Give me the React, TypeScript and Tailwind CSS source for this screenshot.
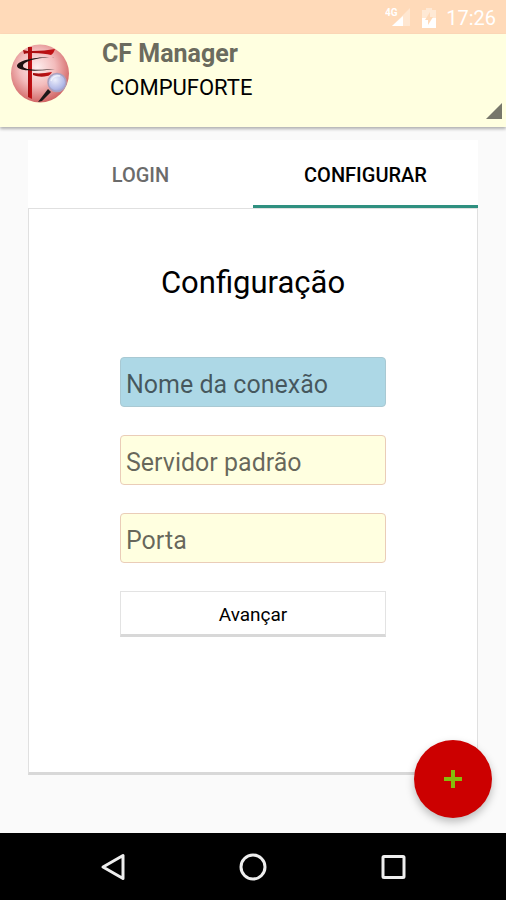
import React, { useState } from 'react';

const fields = [
  { id: 'nome', label: 'Nome da conexão', color: 'bg-[#add8e6] border-[#a9c9d3]' },
  { id: 'servidor', label: 'Servidor padrão', color: 'bg-[#ffffe0] border-[#eacdb8]' },
  { id: 'porta', label: 'Porta', color: 'bg-[#ffffe0] border-[#eacdb8]' },
];

const tabs = [
  { id: 'login', label: 'LOGIN' },
  { id: 'configurar', label: 'CONFIGURAR' },
];

function Logo() {
  return (
    <svg width="60" height="60" viewBox="0 0 60 60" aria-hidden="true">
      <defs>
        <radialGradient id="ball" cx="0.45" cy="0.4" r="0.62">
          <stop offset="0" stopColor="#fdeeee" />
          <stop offset="0.5" stopColor="#f3bcbc" />
          <stop offset="1" stopColor="#d0605f" />
        </radialGradient>
        <linearGradient id="red" x1="0" x2="1">
          <stop offset="0" stopColor="#a00c0e" />
          <stop offset="1" stopColor="#c41215" />
        </linearGradient>
        <radialGradient id="lens" cx="0.4" cy="0.35" r="0.7">
          <stop offset="0" stopColor="#eceffc" />
          <stop offset="0.7" stopColor="#b5bce8" />
          <stop offset="1" stopColor="#959bd2" />
        </radialGradient>
      </defs>
      <circle cx="30" cy="30.5" r="29" fill="url(#ball)" />
      <path d="M18 4h4v52l-4-2z" fill="url(#red)" />
      <path d="M13 7c3 1 6 1 10 1 8 0 15-1 22-2-1 3-2 5-4 6-4-1-10-2-18-2-4 0-7 0-9 1z" fill="url(#red)" />
      <path d="M23 30c7 1 12 0 19-1-1 2-3 4-5 4-4 1-9 1-14-1z" fill="url(#red)" />
      <path
        d="M45 14.500c-11-1-32 3-32 8.500 0 4 14 4.500 32 3-20 3-38 2-38-3 0-6 22-10 38-8.500z"
        fill="#1d1010"
      />
      <path d="M38 46l3 3-9 9-4 1z" fill="#1c1818" />
      <circle cx="47" cy="39.500" r="9" fill="url(#lens)" stroke="#aaa0be" strokeWidth="1.500" />
      <path d="M41 38c1-4 5-6 9-5" fill="none" stroke="#fff" strokeWidth="1.500" opacity="0.6" />
    </svg>
  );
}

function StatusBar() {
  return (
    <div className="flex h-[34px] items-center justify-end bg-[#ffdab9] pr-[10px] pt-[2px] text-white">
      <svg width="26" height="22" viewBox="0 0 26 22" className="mr-[11px]" aria-hidden="true">
        <path d="M25 1v18H7z" fill="#fff" opacity="0.35" />
        <path d="M18 9v10H7z" fill="#fff" />
        <text x="0" y="9" fontSize="10" fontWeight="700" fontFamily="Roboto" fill="#fff">4G</text>
      </svg>
      <svg width="14" height="20" viewBox="0 0 14 20" className="mr-[10px]" aria-hidden="true">
        <path d="M4 0h6v2h4v8H0V2h4z" fill="#fff" opacity="0.4" />
        <path d="M0 10h14v10H0z" fill="#fff" />
        <path d="M8 4v5h3l-5 8v-5H3z" fill="#ffdab9" />
      </svg>
      <span className="text-xl leading-6">17:26</span>
    </div>
  );
}

export default function App() {
  const [tab, setTab] = useState('configurar');
  const [values, setValues] = useState<Record<string, string>>({});

  return (
    <div className="flex min-h-screen flex-col bg-[#fafafa] font-[Roboto,sans-serif] text-black">
      <StatusBar />

      <header className="relative z-10 flex h-[93px] bg-[#ffffe0] pl-[10px] shadow-[0_2px_3px_rgba(0,0,0,0.3)]">
        <div className="mr-8 pt-[9px]">
          <Logo />
        </div>
        <div className="flex flex-1 flex-col">
          <h1 className="pt-1 text-[25px] font-bold leading-8 text-[#6b6b5e]">CF Manager</h1>
          <div className="relative flex-1">
            <select
              aria-label="Empresa"
              className="w-full appearance-none bg-transparent pl-2 pr-6 text-[22px] leading-9 outline-none"
            >
              <option>COMPUFORTE</option>
            </select>
            <svg
              width="16"
              height="16"
              viewBox="0 0 16 16"
              className="pointer-events-none absolute bottom-2 right-1"
              aria-hidden="true"
            >
              <path d="M16 0v16H0z" fill="#77776b" />
            </svg>
          </div>
        </div>
      </header>

      <main className="relative flex flex-1 flex-col px-7 pb-[58px] pt-[13px]">
        <div role="tablist" className="grid grid-cols-2 bg-white">
          {tabs.map((t) => (
            <button
              key={t.id}
              type="button"
              role="tab"
              aria-selected={tab === t.id}
              onClick={() => setTab(t.id)}
              className={`h-[68px] border-b-[3px] pt-1 text-xl font-medium ${
                tab === t.id ? 'border-[#2f9080] text-black' : 'border-transparent text-[#6b6b6b]'
              }`}
            >
              {t.label}
            </button>
          ))}
        </div>

        <form
          className="flex flex-1 flex-col gap-7 border border-b-[3px] border-[#e0e0e0] border-b-[#d8d8d8] bg-white px-[91px] pt-[54px]"
          onSubmit={(e) => e.preventDefault()}
        >
          <h2 className="mb-[26px] text-center text-[31px] leading-10">Configuração</h2>
          {fields.map((f) => (
            <input
              key={f.id}
              id={f.id}
              type="text"
              aria-label={f.label}
              placeholder={f.label}
              value={values[f.id] || ''}
              onChange={(e) => setValues({ ...values, [f.id]: e.target.value })}
              className={`h-[50px] w-full rounded-[4px] border px-[5px] pt-1 text-[25px] outline-none placeholder:text-black/60 ${f.color}`}
            />
          ))}
          <button
            type="submit"
            className="h-[46px] border border-b-[3px] border-[#e3e3e3] border-b-[#d8d8d8] bg-white pt-1 text-[19px]"
          >
            Avançar
          </button>
        </form>

        <button
          type="button"
          aria-label="Adicionar"
          className="absolute bottom-[15px] right-[14px] flex size-[78px] items-center justify-center rounded-full bg-[#cc0000] shadow-[0_4px_8px_rgba(0,0,0,0.25)]"
        >
          <svg width="20" height="20" viewBox="0 0 20 20" aria-hidden="true">
            <path d="M8 1h4v7h7v4h-7v7H8v-7H1V8h7z" fill="#86bd0c" />
          </svg>
        </button>
      </main>

      <nav className="flex h-[67px] bg-black px-[43px] text-[#eeeeee]">
        <button type="button" aria-label="Voltar" className="flex flex-1 items-center justify-center">
          <svg width="28" height="28" viewBox="0 0 28 28" fill="none" stroke="currentColor" strokeWidth="3">
            <path d="M24 2.500v23L4 14z" strokeLinejoin="round" />
          </svg>
        </button>
        <button type="button" aria-label="Início" className="flex flex-1 items-center justify-center">
          <svg width="28" height="28" viewBox="0 0 28 28" fill="none" stroke="currentColor" strokeWidth="3">
            <circle cx="14" cy="14" r="12" />
          </svg>
        </button>
        <button type="button" aria-label="Recentes" className="flex flex-1 items-center justify-center">
          <svg width="28" height="28" viewBox="0 0 28 28" fill="none" stroke="currentColor" strokeWidth="3">
            <rect x="4" y="3.500" width="21" height="21" rx="1" />
          </svg>
        </button>
      </nav>
    </div>
  );
}
